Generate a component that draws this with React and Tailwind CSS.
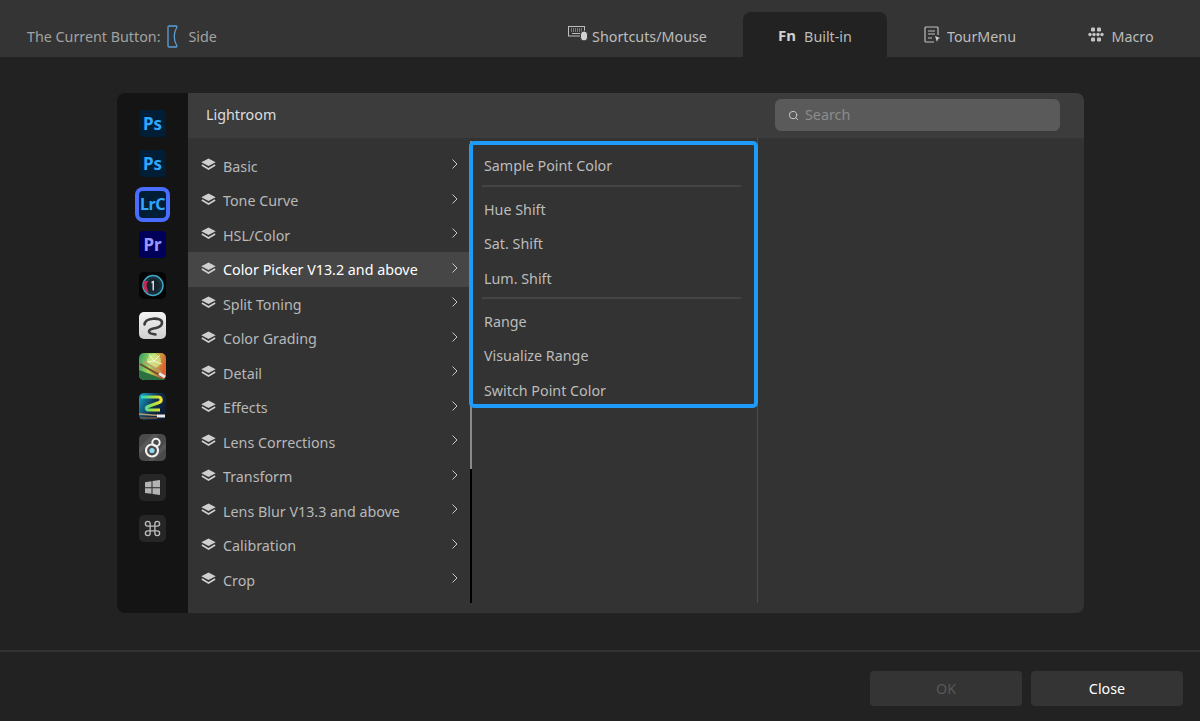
import { Search } from "lucide-react";

const categories = [
  "Basic",
  "Tone Curve",
  "HSL/Color",
  "Color Picker V13.2 and above",
  "Split Toning",
  "Color Grading",
  "Detail",
  "Effects",
  "Lens Corrections",
  "Transform",
  "Lens Blur V13.3 and above",
  "Calibration",
  "Crop",
];

function LayersIcon() {
  return (
    <svg width="15" height="13" viewBox="0 0 14 12" className="shrink-0 -mt-[3px]">
      <path d="M7 .3 13.700 3.800 7 7.300 .3 3.800Z" fill="#cfcfcf" />
      <path d="M.8 6.500 7 10.200l6.200-3.700" fill="none" stroke="#cfcfcf" strokeWidth="1.500" />
    </svg>
  );
}

function Chevron() {
  return (
    <svg width="8" height="12" viewBox="0 0 8 12" className="shrink-0 -mt-1">
      <path d="M2.500 1.500 7 6 2.500 10.500" fill="none" stroke="#c8c8c8" strokeWidth="1" />
    </svg>
  );
}

function SideIcon() {
  return (
    <svg width="11" height="23" viewBox="0 0 11 23" className="mr-[11px] ml-[6px] shrink-0">
      <path
        d="M2 1h7c1 0 1 1 .5 2-3 5-3 12 0 17 .5 1 .5 2-.5 2H2c-.7 0-1-.5-1-1V2c0-.5.3-1 1-1Z"
        fill="none"
        stroke="#5a9fd6"
        strokeWidth="1.300"
      />
    </svg>
  );
}

function KeyboardMouseIcon() {
  return (
    <svg width="20" height="17" viewBox="0 0 20 17" className="shrink-0 -mt-[6px] mr-[4px]">
      <rect x="0.500" y="1.500" width="16" height="9.500" fill="none" stroke="#bdbdbd" />
      <path d="M3 4h11M3 6h11" stroke="#bdbdbd" strokeDasharray="1 1" />
      <path d="M4 8.500h8" stroke="#bdbdbd" />
      <rect x="12.500" y="6" width="7" height="10" rx="3.500" fill="#d0d0d0" stroke="#343434" />
    </svg>
  );
}

function TourMenuIcon() {
  return (
    <svg width="17" height="17" viewBox="0 0 17 17" className="shrink-0 -mt-[4px] mr-[6px]">
      <path d="M14 9V2a1 1 0 0 0-1-1H2a1 1 0 0 0-1 1v13a1 1 0 0 0 1 1h8" fill="none" stroke="#bdbdbd" strokeWidth="1.200" />
      <path d="M4 5h7M4 8h7M4 12h4" stroke="#bdbdbd" strokeWidth="1.200" />
      <path d="m11 10 5 2-2 1-1 3Z" fill="#d0d0d0" />
    </svg>
  );
}

function MacroIcon() {
  return (
    <svg width="16" height="15" viewBox="0 0 16 15" className="shrink-0 -mt-[4px] mr-[7px]">
      <g fill="#c4c4c4">
        <rect x="3" y="0.500" width="4" height="4" rx="1.200" />
        <rect x="9" y="0.500" width="4" height="4" rx="1.200" />
        <circle cx="2" cy="7.500" r="1.700" />
        <circle cx="6" cy="7.500" r="1.700" />
        <circle cx="10" cy="7.500" r="1.700" />
        <circle cx="14" cy="7.500" r="1.700" />
        <rect x="3" y="10.500" width="4" height="4" rx="1.200" />
        <rect x="9" y="10.500" width="4" height="4" rx="1.200" />
      </g>
    </svg>
  );
}

function AdobeTile({ label, bg, color, ring }) {
  return (
    <div
      className={`w-[27px] h-[27px] shrink-0 rounded-[4px] flex items-center justify-center font-bold leading-none ${ring ? "text-[16px] tracking-[-0.5px] ring-[4px] ring-[#4a6cff]" : "text-[17px]"} ${bg} ${color}`}
    >
      {label}
    </div>
  );
}

function CaptureOneIcon() {
  return (
    <svg width="27" height="27" viewBox="0 0 27 27" className="shrink-0">
      <rect width="27" height="27" rx="5" fill="#050505" />
      <circle cx="14" cy="13.500" r="10" fill="#16303c" stroke="#3fa7c4" strokeWidth="1.500" />
      <path d="M5 9a10 10 0 0 0 5 13c-2-4-2-9 1-13Z" fill="#c22b55" />
      <circle cx="14" cy="13.500" r="6.500" fill="#14232b" />
      <path d="M12.500 9.500 15 8.500v10h-1.500v-7.500l-1 .4Z" fill="#d8d8d8" />
    </svg>
  );
}

function ClipStudioIcon() {
  return (
    <svg width="27" height="27" viewBox="0 0 27 27" className="shrink-0">
      <defs>
        <linearGradient id="clipBg" x1="0" y1="0" x2="0" y2="1">
          <stop offset="0" stopColor="#f4f4f4" />
          <stop offset="1" stopColor="#cfcfcf" />
        </linearGradient>
      </defs>
      <rect width="27" height="27" rx="5" fill="url(#clipBg)" />
      <path
        d="M5.500 12.500C6 8.500 9 7 14 6.700c5-.3 9 .8 9 4 0 3-3.500 4.800-7 5.500-3 .6-6 1-6 3.300 0 2 3 2.500 6.500 3"
        fill="none"
        stroke="#3c3c3c"
        strokeWidth="2.600"
        strokeLinecap="round"
      />
    </svg>
  );
}

function RebelleIcon() {
  return (
    <svg width="27" height="27" viewBox="0 0 27 27" className="shrink-0">
      <defs>
        <linearGradient id="rebBg" x1="0" y1="0" x2="1" y2="0.300">
          <stop offset="0" stopColor="#2f9a68" />
          <stop offset="0.500" stopColor="#a8d858" />
          <stop offset="1" stopColor="#e0602c" />
        </linearGradient>
      </defs>
      <rect width="27" height="27" rx="5" fill="url(#rebBg)" />
      <path d="M0 17 27 27H5a5 5 0 0 1-5-5Z" fill="#2a7040" />
      <circle cx="15" cy="8" r="7" fill="#d8ec90" opacity=".7" />
      <path d="M15 8 10 1M15 8l6-6M15 8l8 3M15 8 8 9" stroke="#fdfdf0" strokeWidth=".8" />
      <path d="M1 11 24 24" stroke="#6b4a2c" strokeWidth="2" />
      <path d="M4 8 22 19" stroke="#b89a72" strokeWidth="1.500" />
      <path d="M20 20.500 26 24" stroke="#e8e8e8" strokeWidth="3" />
    </svg>
  );
}

function PainterIcon() {
  return (
    <svg width="27" height="27" viewBox="0 0 27 27" className="shrink-0">
      <defs>
        <linearGradient id="paintStroke" x1="0" y1="0" x2="1" y2="0">
          <stop offset="0" stopColor="#20d8c8" />
          <stop offset="0.600" stopColor="#a8e040" />
          <stop offset="1" stopColor="#f0e030" />
        </linearGradient>
        <linearGradient id="paintBg" x1="0" y1="0" x2="1" y2="0.500">
          <stop offset="0" stopColor="#18a8d0" />
          <stop offset="0.600" stopColor="#103050" />
          <stop offset="1" stopColor="#0c1c34" />
        </linearGradient>
      </defs>
      <rect width="27" height="27" rx="5" fill="url(#paintBg)" />
      <path
        d="M2 4h17c4 0 4 4.500 1 5.500L9 13.500c-2.500 1-2 3.500 1 3.500h11"
        fill="none"
        stroke="url(#paintStroke)"
        strokeWidth="3.200"
      />
      <path d="M0 21 19 22.500" stroke="#b89a72" strokeWidth="1.500" />
      <path d="M1 25 18 25" stroke="#7a5a3c" strokeWidth="1.500" />
      <path d="M18 23h8" stroke="#e8e8e8" strokeWidth="3" />
    </svg>
  );
}

function LensIcon() {
  return (
    <svg width="27" height="27" viewBox="0 0 27 27" className="shrink-0">
      <rect width="27" height="27" rx="5" fill="#4a4a4a" />
      <path d="M0 14 14 0h6L0 20ZM27 14 14 27h-5L27 8Z" fill="#585858" />
      <circle cx="17" cy="8.500" r="3.700" fill="none" stroke="#f0f0f0" strokeWidth="2" />
      <circle cx="13" cy="16.500" r="6" fill="none" stroke="#f0f0f0" strokeWidth="2.200" />
      <circle cx="13" cy="16.500" r="2.600" fill="#8fd8f0" />
    </svg>
  );
}

function WindowsIcon() {
  return (
    <div className="w-[27px] h-[27px] shrink-0 rounded-[5px] bg-[#262626] flex items-center justify-center">
      <svg width="15" height="15" viewBox="0 0 15 15">
        <path d="M0 2.200 6.500 1.200v6H0ZM7.500 1 15 0v7.200H7.500ZM0 8.200h6.500v5.600L0 12.900ZM7.500 8.200H15V15l-7.500-1Z" fill="#b4b4b4" />
      </svg>
    </div>
  );
}

function CommandIcon() {
  return (
    <div className="w-[27px] h-[27px] shrink-0 rounded-[5px] bg-[#262626] flex items-center justify-center">
      <svg width="19" height="19" viewBox="0 0 24 24" fill="none" stroke="#bdbdbd" strokeWidth="1.700">
        <path d="M15 6v12a3 3 0 1 0 3-3H6a3 3 0 1 0 3 3V6a3 3 0 1 0-3 3h12a3 3 0 1 0-3-3" />
      </svg>
    </div>
  );
}

function ActionRow({ children }) {
  return <div className="h-[34.5px] flex items-center pl-3 text-[#bcbcbc]">{children}</div>;
}

export default function App() {
  return (
    <div
      className="w-[1200px] h-[721px] overflow-hidden bg-[#222222] flex flex-col text-[14.3px]"
      style={{ fontFamily: '"Noto Sans", sans-serif' }}
    >
      {/* Top bar */}
      <div className="h-[57px] bg-[#343434] flex items-end shrink-0">
        <div className="h-[45px] pt-[4px] pl-[27px] flex items-center text-[#a2a2a2]">
          <span>The Current Button:</span>
          <SideIcon />
          <span>Side</span>
        </div>
        <div className="ml-auto mr-[11px] flex text-[#bcbcbc]">
          <div className="w-[211px] h-[45px] pt-[4px] flex items-center justify-center">
            <KeyboardMouseIcon />
            Shortcuts/Mouse
          </div>
          <div className="w-[144px] h-[45px] pt-[4px] flex items-center justify-center bg-[#222222] rounded-t-lg">
            <span className="font-bold text-[15px] leading-none text-[#d0d0d0] mr-[8px] -mt-[3px]">Fn</span>
            Built-in
          </div>
          <div className="w-[166px] h-[45px] pt-[4px] flex items-center justify-center">
            <TourMenuIcon />
            TourMenu
          </div>
          <div className="w-[136px] h-[45px] pt-[4px] flex items-center justify-center">
            <MacroIcon />
            Macro
          </div>
        </div>
      </div>

      {/* Main */}
      <div className="flex-1 pt-9 pl-[117px]">
        <div className="w-[967px] h-[520px] rounded-lg overflow-hidden flex bg-[#333333]">
          <div className="w-[71px] shrink-0 bg-[#141414] pt-[16.8px] flex flex-col items-center gap-[13.5px]">
            <AdobeTile label="Ps" bg="bg-[#001e36]" color="text-[#31a8ff]" />
            <AdobeTile label="Ps" bg="bg-[#001e36]" color="text-[#31a8ff]" />
            <AdobeTile label="LrC" bg="bg-[#001e36]" color="text-[#31a8ff]" ring />
            <AdobeTile label="Pr" bg="bg-[#00005b]" color="text-[#9999ff]" />
            <CaptureOneIcon />
            <ClipStudioIcon />
            <RebelleIcon />
            <PainterIcon />
            <LensIcon />
            <WindowsIcon />
            <CommandIcon />
          </div>

          <div className="flex-1 flex flex-col">
            <div className="h-[45px] shrink-0 bg-[#3c3c3c] flex items-center pl-[18px] pr-6 pb-[1px] text-[#dedede]">
              <span>Lightroom</span>
              <div className="ml-auto w-[285px] h-[32px] bg-[#5a5a5a] rounded-md flex items-center pl-[13px] text-[#8c8c8c]">
                <Search size={11} strokeWidth={2} color="#d0d0d0" className="mr-[6px]" />
                Search
              </div>
            </div>

            <div className="flex-1 flex pb-[10px]">
              <div className="w-[282px] pt-[10.5px] shrink-0">
                {categories.map((name, i) => (
                  <div
                    key={name}
                    className={`h-[34.5px] pt-[1.2px] flex items-center pl-[13px] pr-3 ${i === 3 ? "bg-[#464646] text-white" : "text-[#b8b8b8]"}`}
                  >
                    <LayersIcon />
                    <span className="ml-[7px]">{name}</span>
                    <span className="ml-auto">
                      <Chevron />
                    </span>
                  </div>
                ))}
              </div>

              {/* Scrollbar */}
              <div className="w-[2px] shrink-0 mt-[3px] bg-black">
                <div className="h-[328px] bg-[#8a8a8a]" />
              </div>

              <div className="relative w-[286px] shrink-0 border-r border-[#4c4c4c] pt-[10px]">
                <ActionRow>Sample Point Color</ActionRow>
                <div className="h-[2px] w-[259px] ml-[10px] mt-[2.5px] mb-[5px] bg-[#444444]" />
                <ActionRow>Hue Shift</ActionRow>
                <ActionRow>Sat. Shift</ActionRow>
                <ActionRow>Lum. Shift</ActionRow>
                <div className="h-[2px] w-[259px] ml-[10px] mt-[1.5px] mb-[5px] bg-[#444444]" />
                <ActionRow>Range</ActionRow>
                <ActionRow>Visualize Range</ActionRow>
                <ActionRow>Switch Point Color</ActionRow>
                <div className="absolute -left-[3px] top-[3px] w-[289px] h-[267px] border-[4px] border-[#1e9bfa] rounded-[5px]" />
              </div>
            </div>
          </div>
        </div>
      </div>

      {/* Footer */}
      <div className="h-[71px] shrink-0 border-t-2 border-[#333333] pt-[19px] pr-[17px] flex justify-end gap-[9px]">
        <div className="w-[152px] h-[35px] rounded bg-[#343434] flex items-center justify-center text-[#585858]">OK</div>
        <div className="w-[152px] h-[35px] rounded bg-[#343434] flex items-center justify-center text-white">Close</div>
      </div>
    </div>
  );
}
